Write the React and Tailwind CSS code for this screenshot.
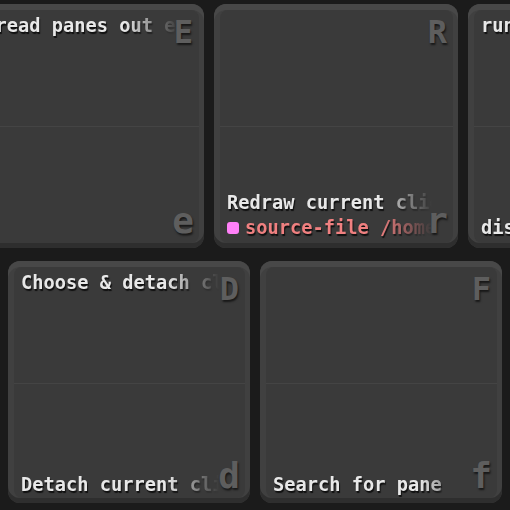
import React from 'react';

const textCls =
  "font-['DejaVu_Sans_Mono',monospace] font-bold text-[18.7px] leading-[25px] whitespace-nowrap [text-shadow:1px_2px_1px_rgba(0,0,0,0.75)]";
const fade = '[mask-image:linear-gradient(to_right,black_74%,transparent_100%)]';
const bigCls =
  "absolute font-['DejaVu_Sans_Mono',monospace] font-bold text-[#5e5e5e] [text-shadow:1px_2px_2px_rgba(0,0,0,0.6)]";

function Line({ line }) {
  if (typeof line === 'string') return <div className="text-[#e8e8e8]">{line}</div>;
  return (
    <div className="flex items-center text-[#f08080]">
      <span className="w-[12px] h-[12px] rounded-[3px] bg-[#ff80f8] mr-[6px] shrink-0" />
      {line.text}
    </div>
  );
}

function Key({ up, low, top = [], bottom = [], size = 'w-[244px] h-[244px]', pb = 'pb-[3px]', tw = 'w-[205px]' }) {
  return (
    <div className={`${size} shrink-0 rounded-[12px] bg-[#404040] pt-[6px] pl-[6px] pr-[5px] pb-[5px] shadow-[inset_0_6px_0_#484848,inset_0_-5px_0_#2e2e2e]`}>
      <div className="relative h-full rounded-[8px] bg-[#3a3a3a] flex flex-col overflow-hidden">
        <div className="flex-1 pl-[7px] pt-[3px]">
          <div className={`${tw} overflow-hidden ${fade} ${textCls}`}>
            {top.map((l, i) => <Line key={i} line={l} />)}
          </div>
        </div>
        <div className="h-px bg-[#444444]" />
        <div className={`flex-1 pl-[7px] ${pb} flex flex-col justify-end`}>
          <div className={`${tw} overflow-hidden ${fade} ${textCls}`}>
            {bottom.map((l, i) => <Line key={i} line={l} />)}
          </div>
        </div>
        <span className={`${bigCls} text-[32px] leading-[32px] top-[6px] right-[6px]`}>{up}</span>
        <span className={`${bigCls} text-[36px] leading-[36px] bottom-[4px] right-[5px]`}>{low}</span>
      </div>
    </div>
  );
}

export default function App() {
  return (
    <div className="w-[510px] h-[510px] overflow-hidden bg-[#1b1b1b] pt-[4px]">
      <div className="flex gap-[10px] ml-[-40px]">
        <Key up="E" low="e" top={['Spread panes out evenly']} />
        <Key up="R" low="r" bottom={['Redraw current client', { text: 'source-file /home/user/.tmux.conf' }]} />
        <Key up="T" low="t" top={['run-shell']} bottom={['display-panes']} />
      </div>
      <div className="flex gap-[10px] ml-[8px] mt-[13px]">
        <Key up="D" low="d" size="w-[242px] h-[242px]" pb="pb-[1px]" tw="w-[198px]" top={['Choose & detach client']} bottom={['Detach current client']} />
        <Key up="F" low="f" size="w-[242px] h-[242px]" pb="pb-[1px]" tw="w-[198px]" bottom={['Search for pane']} />
      </div>
    </div>
  );
}
